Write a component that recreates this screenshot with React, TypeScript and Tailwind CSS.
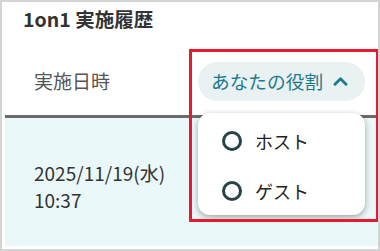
import React from "react";

export default function App() {
  return (
    <div
      className="relative w-[380px] h-[251px] overflow-hidden bg-white border-2 border-[#d4d4d4]"
      style={{ fontFamily: '"Noto Sans CJK JP", "Noto Sans", sans-serif' }}
    >
      <div className="h-[34px] flex items-center pl-[21px] text-[19.5px] font-bold text-[#333333]">
        1on1 実施履歴
      </div>
      <div className="ml-[3px]">
        <div className="h-[82px] pt-[12px] flex items-center border-b-[3px] border-[#6b6b6b]">
          <div className="w-[193px] pl-[29px] text-[19px] text-[#555555]">実施日時</div>
          <div className="h-[39px] w-[167px] rounded-full bg-[#e9f1f3] flex items-center pl-[13px] gap-[8px] text-[18.7px] text-[#1d7a8c]">
            <span>あなたの役割</span>
            <svg width="19" height="19" viewBox="0 0 24 24" fill="none" stroke="#1d7a8c" strokeWidth="3.6" strokeLinecap="round" strokeLinejoin="round">
              <path d="M5 15.5 L12 8.5 L19 15.5" />
            </svg>
          </div>
        </div>
        <div className="h-[128px] bg-[#ebf8fa] pl-[29px] pt-[41px] text-[19px] leading-[27px] text-[#333333]">
          <div>2025/11/19(水)</div>
          <div>10:37</div>
        </div>
      </div>

      <div className="absolute left-[196px] top-[111px] w-[167px] h-[102px] rounded-[12px] bg-white shadow-[0_2px_6px_rgba(0,0,0,0.35)] py-[3px]">
        {["ホスト", "ゲスト"].map((t) => (
          <div key={t} className="h-[50px] flex items-center pl-[24px] gap-[13px] text-[18px] text-[#222222]">
            <span className="w-[20px] h-[20px] rounded-full border-[3px] border-[#264348]" />
            <span>{t}</span>
          </div>
        ))}
      </div>

      <div className="absolute left-[187px] top-[47px] w-[190px] h-[173px] border-[3px] border-[#e8192c]" />
    </div>
  );
}
